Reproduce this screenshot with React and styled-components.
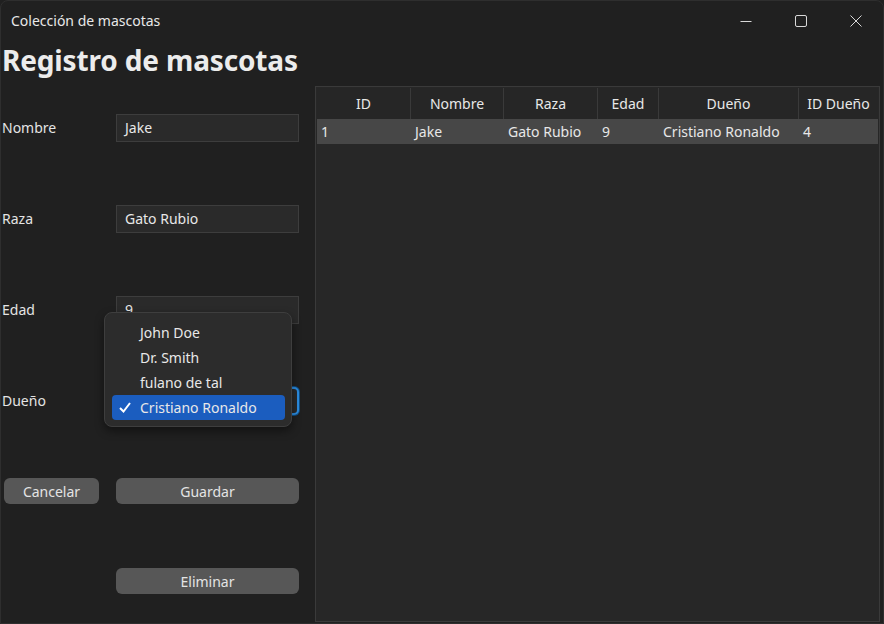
import React from 'react';
import styled, { createGlobalStyle } from "styled-components";

const GlobalStyle = createGlobalStyle`
    html, body {
        margin: 0;
        padding: 0;
        background: #202020;
    }
    * {
        box-sizing: border-box;
    }
`;

const font = `"Noto Sans", "Open Sans", sans-serif`;

const Window = styled.div`
    width: 884px;
    height: 624px;
    background: #202020;
    border-radius: 8px 8px 0 0;
    border: 1px solid #2e2e2e;
    display: flex;
    flex-flow: column nowrap;
    font-family: ${font};
    color: #e4e4e4;
    overflow: hidden;
    position: relative;
`;

const TitleBar = styled.div`
    height: 39px;
    display: flex;
    align-items: center;
    justify-content: space-between;
    padding-left: 10px;
    font-size: 14px;
    color: #e8e8e8;
`;

const Controls = styled.div`
    display: flex;
    height: 100%;
`;

const ControlButton = styled.div`
    width: 55px;
    height: 100%;
    display: flex;
    align-items: center;
    justify-content: center;
    svg {
        stroke: #d8d8d8;
        fill: none;
        stroke-width: 1;
    }
`;

const Heading = styled.h1`
    margin: 0;
    height: 42px;
    padding: 0 0 0 1px;
    font-size: 28px;
    line-height: 40px;
    font-weight: 700;
    color: #ececec;
    letter-spacing: -0.15px;
`;

const Content = styled.div`
    flex: 1;
    display: flex;
    min-height: 0;
`;

const Form = styled.div`
    width: 313px;
    display: grid;
    grid-template-columns: 114px 184px;
    grid-template-rows: 91px 91px 91px 91px 90px 90px;
    align-items: center;
    align-content: start;
    position: relative;
`;

const Label = styled.div`
    font-size: 14px;
    padding-left: 1px;
`;

const Input = styled.div`
    height: 28px;
    background: #2a2a2a;
    border: 1px solid #3d3d3d;
    font-size: 14px;
    padding: 0 8px;
    display: flex;
    align-items: center;
    color: #e8e8e8;
    margin-left: 1px;
    ${({focused}) => focused && `
        border: 2px solid #2c8ce0;
        border-radius: 5px;
        box-shadow: 0 0 0 1px #0f4f86;
    `}
`;

const Button = styled.div`
    height: 26px;
    background: #575757;
    border-radius: 6px;
    display: flex;
    align-items: center;
    justify-content: center;
    font-size: 14px;
    color: #e4e4e4;
    margin: ${({left}) => left ? '0 16px 0 3px' : '0 0 0 1px'};
`;

const Popup = styled.div`
    position: absolute;
    left: 103px;
    top: 230px;
    width: 188px;
    background: #2c2c2c;
    border: 1px solid #3e3e3e;
    border-radius: 8px;
    padding: 7px 6px 6px 7px;
    box-shadow: 0 4px 10px rgba(0, 0, 0, 0.45);
    z-index: 5;
`;

const Option = styled.div`
    height: 25px;
    display: flex;
    align-items: center;
    padding-left: 28px;
    font-size: 14px;
    border-radius: 4px;
    position: relative;
    color: #e8e8e8;
    background: ${({selected}) => selected ? '#1b5dbf' : 'transparent'};
`;

const Check = styled.svg`
    position: absolute;
    left: 7px;
    top: 7px;
`;

const TableFrame = styled.div`
    flex: 1;
    margin: 4px 3px 1px 1px;
    border: 1px solid #3a3a3a;
    padding: 1px;
    background: #272727;
`;

const Grid = styled.div`
    display: grid;
    grid-template-columns: 94px 93px 94px 61px 140px 1fr;
`;

const HeadCell = styled.div`
    height: 31px;
    display: flex;
    align-items: center;
    justify-content: center;
    font-size: 14px;
    background: #262626;
    border-right: ${({last}) => last ? 'none' : '1px solid #3a3a3a'};
    color: #e8e8e8;
`;

const Cell = styled.div`
    height: 25px;
    display: flex;
    align-items: center;
    padding-left: 4px;
    font-size: 14px;
    background: #474747;
    color: #e8e8e8;
`;

const headers = ['ID', 'Nombre', 'Raza', 'Edad', 'Dueño', 'ID Dueño'];
const rows = [['1', 'Jake', 'Gato Rubio', '9', 'Cristiano Ronaldo', '4']];
const owners = ['John Doe', 'Dr. Smith', 'fulano de tal', 'Cristiano Ronaldo'];

const App = () => {
    return (
        <Window>
            <GlobalStyle />
            <TitleBar>
                <span>Colección de mascotas</span>
                <Controls>
                    <ControlButton>
                        <svg width="12" height="12" viewBox="0 0 12 12"><path d="M0.5 6.5h11" /></svg>
                    </ControlButton>
                    <ControlButton>
                        <svg width="12" height="12" viewBox="0 0 12 12"><rect x="0.5" y="0.5" width="11" height="11" rx="1.5" /></svg>
                    </ControlButton>
                    <ControlButton>
                        <svg width="12" height="12" viewBox="0 0 12 12"><path d="M0.5 0.5l11 11M11.5 0.5l-11 11" /></svg>
                    </ControlButton>
                </Controls>
            </TitleBar>
            <Heading>Registro de mascotas</Heading>
            <Content>
                <Form>
                    <Label>Nombre</Label>
                    <Input>Jake</Input>
                    <Label>Raza</Label>
                    <Input>Gato Rubio</Input>
                    <Label>Edad</Label>
                    <Input>9</Input>
                    <Label>Dueño</Label>
                    <Input focused />
                    <Button left>Cancelar</Button>
                    <Button>Guardar</Button>
                    <div />
                    <Button>Eliminar</Button>
                    <Popup>
                        {owners.map((o, i) => (
                            <Option key={o} selected={i === owners.length - 1}>
                                {i === owners.length - 1 && (
                                    <Check width="12" height="11" viewBox="0 0 12 11">
                                        <path d="M1 6l3.5 3.5L11 1" stroke="#ffffff" strokeWidth="2" fill="none" />
                                    </Check>
                                )}
                                {o}
                            </Option>
                        ))}
                    </Popup>
                </Form>
                <TableFrame>
                    <Grid>
                        {headers.map((h, i) => (
                            <HeadCell key={h} last={i === headers.length - 1}>{h}</HeadCell>
                        ))}
                        {rows.map(r => r.map((c, i) => <Cell key={i}>{c}</Cell>))}
                    </Grid>
                </TableFrame>
            </Content>
        </Window>
    );
};

export default App;
